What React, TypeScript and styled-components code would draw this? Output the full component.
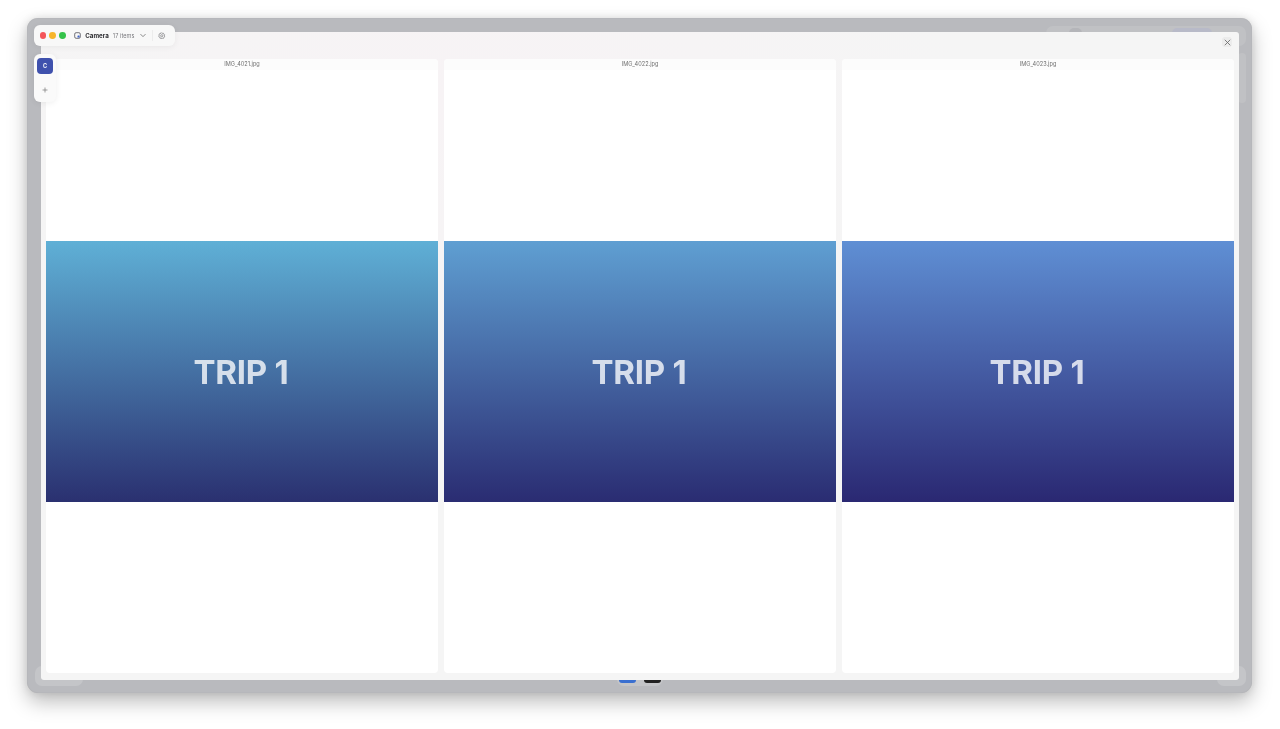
import React from "react";
import styled, { createGlobalStyle } from "styled-components";

const Global = createGlobalStyle`
  html, body { margin: 0; padding: 0; background: #fff; width: 1280px; height: 729px; overflow: hidden; }
  body { font-family: Inter, "Liberation Sans", sans-serif; }
`;

const Stage = styled.div`
  width: 1280px;
  height: 729px;
  padding: 18px 28px 36px 27px;
  box-sizing: border-box;
  background: #fff;
`;

const Frame = styled.div`
  position: relative;
  width: 100%;
  height: 100%;
  box-sizing: border-box;
  padding: 14px 13px 13px 14px;
  background: #b9babe;
  border-radius: 11px;
  box-shadow: 0 9px 20px rgba(0, 0, 0, 0.26), 0 0 9px rgba(0, 0, 0, 0.1), inset 0 0 1px rgba(0, 0, 0, 0.15);
`;

const GhostBar = styled.div<{ $l?: number; $r?: number; $t?: number; $b?: number; $w: number; $h: number; $c?: string; $rad?: number }>`
  position: absolute;
  ${(p) => (p.$l !== undefined ? `left: ${p.$l}px;` : "")}
  ${(p) => (p.$r !== undefined ? `right: ${p.$r}px;` : "")}
  ${(p) => (p.$t !== undefined ? `top: ${p.$t}px;` : "")}
  ${(p) => (p.$b !== undefined ? `bottom: ${p.$b}px;` : "")}
  width: ${(p) => p.$w}px;
  height: ${(p) => p.$h}px;
  background: ${(p) => p.$c ?? "#c2c3c6"};
  border-radius: ${(p) => p.$rad ?? 7}px;
  filter: blur(0.4px);
`;

const Modal = styled.div`
  position: relative;
  height: 100%;
  display: flex;
  flex-direction: column;
  background: radial-gradient(ellipse 500px 300px at 35% 10%, #f7f3f5, #f5f5f5);
  border-radius: 3px;
  overflow: hidden;
  filter: blur(0.4px);
`;

const ModalHeader = styled.div`
  flex: 0 0 27px;
  box-sizing: border-box;
  display: flex;
  justify-content: flex-end;
  align-items: flex-start;
  padding: 5px 7px 0 0;
`;

const CloseButton = styled.div`
  width: 10px;
  height: 10px;
  display: flex;
  align-items: center;
  justify-content: center;
  background: #ececec;
  border-radius: 3px;
  color: #6a6a6a;
`;

const Gallery = styled.div`
  flex: 1;
  min-height: 0;
  display: grid;
  grid-template-columns: repeat(3, 392px);
  column-gap: 6px;
  padding: 0 5px 7px 5px;
`;

const Card = styled.div`
  display: flex;
  flex-direction: column;
  position: relative;
  background: #fff;
  border-radius: 4px;
  overflow: hidden;
`;

const FileName = styled.div`
  flex: 0 0 11px;
  padding-top: 1.5px;
  box-sizing: border-box;
  text-align: center;
  font-size: 5.6px;
  line-height: 7px;
  color: #6e6e6e;
  background: #fcfcfc;
`;

const ImageBox = styled.div<{ $top: string; $bottom: string }>`
  margin-top: 171px;
  height: 261px;
  display: flex;
  align-items: center;
  justify-content: center;
  background: linear-gradient(180deg, ${(p) => p.$top}, ${(p) => p.$bottom});
`;

const TripText = styled.div`
  font-size: 33px;
  font-weight: 700;
  letter-spacing: -0.2px;
  color: rgba(255, 255, 255, 0.78);
  line-height: 1;
  margin: 2px 2px 0 0;
`;

const TitlePill = styled.div`
  position: absolute;
  left: 7px;
  top: 7px;
  width: 141px;
  height: 21px;
  box-sizing: border-box;
  padding-left: 5.5px;
  display: flex;
  align-items: center;
  background: #f8f8f8;
  border-radius: 6px;
  box-shadow: 0 1px 6px rgba(0, 0, 0, 0.06);
  filter: blur(0.35px);
`;

const Lights = styled.div`
  display: flex;
  gap: 2.8px;
  margin-right: 8.5px;
`;

const Light = styled.span<{ $c: string }>`
  width: 6.9px;
  height: 6.9px;
  border-radius: 50%;
  background: ${(p) => p.$c};
`;

const Title = styled.span`
  margin-left: 4px;
  font-size: 6.2px;
  font-weight: 700;
  color: #2c2c30;
`;

const Count = styled.span`
  margin-left: 4px;
  font-size: 5.5px;
  letter-spacing: 0.1px;
  color: #77777c;
  white-space: nowrap;
`;

const Chevron = styled.span`
  display: flex;
  margin-left: 5.5px;
  color: #666;
`;

const Divider = styled.span`
  width: 1px;
  height: 11px;
  background: #ececec;
  margin: 0 5.5px 0 5.5px;
`;

const SidePill = styled.div`
  position: absolute;
  left: 7px;
  top: 36px;
  width: 22px;
  height: 48px;
  box-sizing: border-box;
  padding-top: 4px;
  display: flex;
  flex-direction: column;
  align-items: center;
  background: #fafafa;
  border-radius: 6px;
  box-shadow: 0 1px 6px rgba(0, 0, 0, 0.07);
  filter: blur(0.35px);
`;

const Avatar = styled.div`
  width: 16px;
  height: 16px;
  display: flex;
  align-items: center;
  justify-content: center;
  border-radius: 4px;
  background: #3f51ad;
  color: #fff;
  font-size: 5.5px;
  font-weight: 700;
`;

const AddButton = styled.div`
  margin-top: 13px;
  display: flex;
  color: #777;
`;

const DockMark = styled.div<{ $c: string; $l: number }>`
  position: absolute;
  left: ${(p) => p.$l}px;
  bottom: 10px;
  width: 17px;
  height: 3px;
  background: ${(p) => p.$c};
  border-radius: 0 0 6px 6px;
  filter: blur(0.3px);
`;

const images = [
  { name: "IMG_4021.jpg", top: "#5fb0d6", bottom: "#2a3070" },
  { name: "IMG_4022.jpg", top: "#5f9fd2", bottom: "#2a2c72" },
  { name: "IMG_4023.jpg", top: "#5f8fd4", bottom: "#2a2872" },
];

export default function App() {
  return (
    <>
      <Global />
      <Stage>
        <Frame>
          <GhostBar $l={8} $b={7} $w={48} $h={20} $c="#c4c5c8" />
          <GhostBar $l={590} $b={7} $w={46} $h={20} $c="#c4c5c8" />
          <GhostBar $r={6} $b={7} $w={29} $h={20} $c="#c4c5c8" />
          <GhostBar $r={6} $t={8} $w={200} $h={20} $c="#c0c1c4" />
          <GhostBar $r={170} $t={10} $w={13} $h={10} $c="#b4b5b9" />
          <GhostBar $r={40} $t={10} $w={40} $h={10} $c="#b8bac8" />
          <GhostBar $r={6} $t={35} $w={8} $h={50} $c="#c0c1c4" />
          <DockMark $c="#3a6fd0" $l={592} />
          <DockMark $c="#222" $l={617} />
          <Modal>
            <ModalHeader>
              <CloseButton>
                <svg width="7" height="7" viewBox="0 0 10 10" fill="none" stroke="currentColor" strokeWidth="1.2" strokeLinecap="round">
                  <path d="M1.5 1.5l7 7M8.5 1.5l-7 7" />
                </svg>
              </CloseButton>
            </ModalHeader>
            <Gallery>
              {images.map((img) => (
                <Card key={img.name}>
                  <FileName>{img.name}</FileName>
                  <ImageBox $top={img.top} $bottom={img.bottom}>
                    <TripText>TRIP 1</TripText>
                  </ImageBox>
                </Card>
              ))}
            </Gallery>
          </Modal>
          <TitlePill>
            <Lights>
              <Light $c="#f4555a" />
              <Light $c="#f7b52c" />
              <Light $c="#35c24a" />
            </Lights>
            <svg width="7" height="7" viewBox="0 0 10 10" fill="none">
              <rect x="1" y="1" width="8" height="8" rx="2" stroke="#4a4a55" strokeWidth="1.1" />
              <rect x="5" y="5" width="3" height="3" rx="0.6" fill="#3f62c8" />
            </svg>
            <Title>Camera</Title>
            <Count>17 items</Count>
            <Chevron>
              <svg width="6" height="5" viewBox="0 0 8 6" fill="none" stroke="currentColor" strokeWidth="1" strokeLinecap="round" strokeLinejoin="round">
                <path d="M1 1.5L4 4.5L7 1.5" />
              </svg>
            </Chevron>
            <Divider />
            <svg width="7.5" height="7.5" viewBox="0 0 24 24" fill="none" stroke="#8a8a8e" strokeWidth="2.6">
              <path d="M12 2l2.2 2.6 3.4-.5.9 3.3 3 1.6-1.2 3.2 1.2 3.2-3 1.6-.9 3.3-3.4-.5L12 22l-2.2-2.6-3.4.5-.9-3.3-3-1.6 1.2-3.2-1.2-3.2 3-1.6.9-3.3 3.4.5z" />
              <circle cx="12" cy="12" r="3.5" />
            </svg>
          </TitlePill>
          <SidePill>
            <Avatar>C</Avatar>
            <AddButton>
              <svg width="6" height="6" viewBox="0 0 6 6" fill="none" stroke="currentColor" strokeWidth="0.7">
                <path d="M3 0.5v5M0.5 3h5" />
              </svg>
            </AddButton>
          </SidePill>
        </Frame>
      </Stage>
    </>
  );
}
